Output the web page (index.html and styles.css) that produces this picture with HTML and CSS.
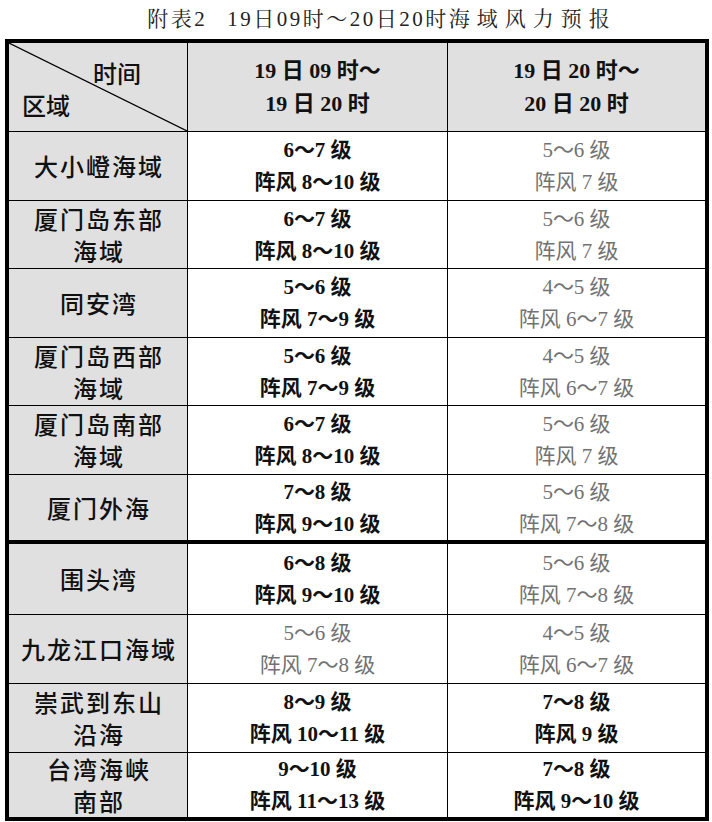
FILE: index.html
```html
<!DOCTYPE html>
<html lang="zh-CN">
<head>
<meta charset="utf-8">
<title>附表2 海域风力预报</title>
<link rel="stylesheet" href="styles.css">
</head>
<body>
<div class="page">
  <h1 class="title"><span class="t-a">附表2</span><span class="t-b">19日09时～20日20时</span><span class="t-c">海域风力预报</span></h1>
  <div class="grid">
    <div class="cell head corner">
      <svg class="diag" width="178" height="88" viewBox="0 0 178 88"><line x1="0" y1="0" x2="178" y2="88" stroke="#000" stroke-width="1.2"/></svg>
      <span class="corner-time">时间</span>
      <span class="corner-area">区域</span>
    </div>
    <div class="cell head"><span>19 日 09 时～</span><span>19 日 20 时</span></div>
    <div class="cell head"><span>19 日 20 时～</span><span>20 日 20 时</span></div>

    <div class="cell area"><span>大小嶝海域</span></div>
    <div class="cell val strong"><span>6～7 级</span><span>阵风 8～10 级</span></div>
    <div class="cell val light"><span>5～6 级</span><span>阵风 7 级</span></div>

    <div class="cell area"><span>厦门岛东部</span><span>海域</span></div>
    <div class="cell val strong"><span>6～7 级</span><span>阵风 8～10 级</span></div>
    <div class="cell val light"><span>5～6 级</span><span>阵风 7 级</span></div>

    <div class="cell area"><span>同安湾</span></div>
    <div class="cell val strong"><span>5～6 级</span><span>阵风 7～9 级</span></div>
    <div class="cell val light"><span>4～5 级</span><span>阵风 6～7 级</span></div>

    <div class="cell area"><span>厦门岛西部</span><span>海域</span></div>
    <div class="cell val strong"><span>5～6 级</span><span>阵风 7～9 级</span></div>
    <div class="cell val light"><span>4～5 级</span><span>阵风 6～7 级</span></div>

    <div class="cell area"><span>厦门岛南部</span><span>海域</span></div>
    <div class="cell val strong"><span>6～7 级</span><span>阵风 8～10 级</span></div>
    <div class="cell val light"><span>5～6 级</span><span>阵风 7 级</span></div>

    <div class="cell area thick"><span>厦门外海</span></div>
    <div class="cell val strong thick"><span>7～8 级</span><span>阵风 9～10 级</span></div>
    <div class="cell val light thick"><span>5～6 级</span><span>阵风 7～8 级</span></div>

    <div class="cell area"><span>围头湾</span></div>
    <div class="cell val strong"><span>6～8 级</span><span>阵风 9～10 级</span></div>
    <div class="cell val light"><span>5～6 级</span><span>阵风 7～8 级</span></div>

    <div class="cell area"><span>九龙江口海域</span></div>
    <div class="cell val light"><span>5～6 级</span><span>阵风 7～8 级</span></div>
    <div class="cell val light"><span>4～5 级</span><span>阵风 6～7 级</span></div>

    <div class="cell area"><span>崇武到东山</span><span>沿海</span></div>
    <div class="cell val strong"><span>8～9 级</span><span>阵风 10～11 级</span></div>
    <div class="cell val strong"><span>7～8 级</span><span>阵风 9 级</span></div>

    <div class="cell area"><span>台湾海峡</span><span>南部</span></div>
    <div class="cell val strong"><span>9～10 级</span><span>阵风 11～13 级</span></div>
    <div class="cell val strong"><span>7～8 级</span><span>阵风 9～10 级</span></div>
  </div>
</div>
</body>
</html>
```
FILE: styles.css
```css
html, body {
  margin: 0;
  padding: 0;
  background: #ffffff;
}

.page {
  width: 712px;
}

.title {
  margin: 0;
  height: 39px;
  line-height: 39px;
  text-align: center;
  font-family: "Liberation Serif", "Noto Serif CJK SC", "Noto Sans CJK SC", serif;
  font-weight: 400;
  font-size: 21px;
  color: #222;
  letter-spacing: 2.5px;
  padding-left: 52px;
}

.t-a {
  margin-right: 20px;
}

.t-c {
  letter-spacing: 7px;
}

.grid {
  margin-left: 5px;
  width: 696px;
  border: 4px solid #000;
  background: #000;
  display: grid;
  grid-template-columns: 178px 259px 257px;
  grid-template-rows: 88px 68px 67px 68px 67px 68px 68px 70px 68px 68px 64px;
  gap: 1px;
}

.cell {
  box-sizing: border-box;
  background: #fff;
  display: flex;
  flex-direction: column;
  align-items: center;
  justify-content: center;
  line-height: 32px;
  white-space: nowrap;
}

.head {
  background: #e0e0e0;
  font-family: "Liberation Serif", "Noto Sans CJK SC", serif;
  font-weight: 700;
  font-size: 22px;
  color: #111;
  line-height: 33px;
}

.corner {
  position: relative;
  align-items: flex-start;
  justify-content: flex-start;
  padding-top: 14px;
  font-family: "Noto Sans CJK SC", sans-serif;
  font-weight: 500;
  font-size: 24px;
  line-height: 32px;
}

.diag {
  position: absolute;
  left: 0;
  top: 0;
}

.corner-time {
  margin-left: 84px;
}

.corner-area {
  margin-left: 13px;
}

.area {
  background: #e0e0e0;
  font-family: "Noto Sans CJK SC", sans-serif;
  font-weight: 500;
  font-size: 24px;
  letter-spacing: 2px;
  padding-left: 2px;
  color: #111;
}

.val {
  font-family: "Liberation Serif", "Noto Sans CJK SC", serif;
  font-size: 21px;
}

.strong {
  font-weight: 700;
  color: #111;
}

.light {
  font-weight: 400;
  color: #727272;
}

.thick {
  border-bottom: 3px solid #000;
}
```
